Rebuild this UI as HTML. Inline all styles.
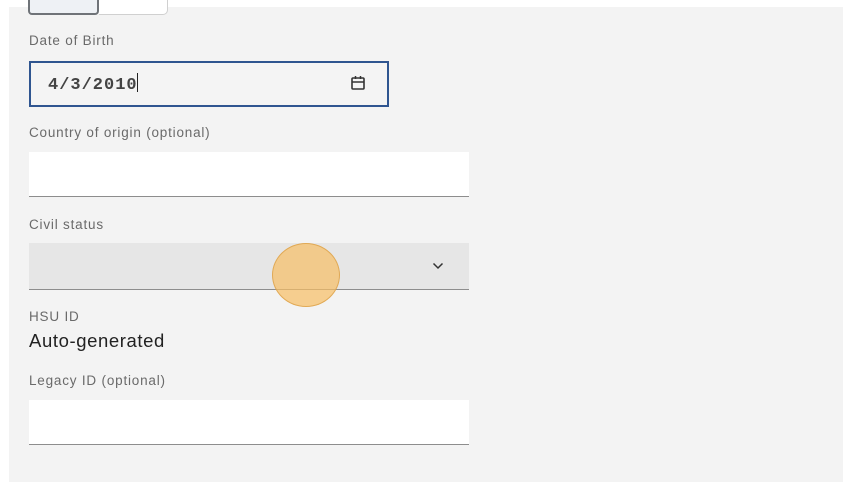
<!DOCTYPE html>
<html><head><meta charset="utf-8"><style>
*{margin:0;padding:0;box-sizing:border-box}
body{width:852px;height:490px;background:#fff;position:relative;overflow:hidden;font-family:"Liberation Sans",sans-serif}
.panel{position:absolute;left:9px;top:7px;width:834px;height:475px;background:#f3f3f3}
.a{position:absolute}
.lbl{position:absolute;left:29px;font-size:13.5px;letter-spacing:0.8px;color:#6a6a6a}
.inp{position:absolute;left:29px;width:440px;height:45px;background:#fff;border-bottom:1px solid #8d8d8d}
</style></head><body>
<div class="panel"></div>
<div class="a" style="left:28px;top:-4px;width:71px;height:19px;background:#eef1f5;border:2px solid #6f7378;border-radius:0 0 4px 4px"></div>
<div class="a" style="left:99px;top:-4px;width:69px;height:19px;background:#fff;border:1px solid #d0d0d0;border-left:none;border-radius:0 0 5px 0"></div>
<div class="lbl" style="top:33px">Date of Birth</div>
<div class="a" style="left:29px;top:61px;width:360px;height:46px;background:#f4f4f4;border:2px solid #2f5590"></div>
<div class="a" style="left:48px;top:73px;font-family:'Liberation Mono',monospace;font-size:17px;letter-spacing:1px;font-weight:bold;color:#444">4/3/2010<span style="display:inline-block;width:1px;height:19px;background:#222;vertical-align:-3px;margin-left:-1px"></span></div>
<svg class="a" style="left:350px;top:75px" width="16" height="16" viewBox="0 0 16 16"><rect x="2" y="3" width="12" height="11" rx="1" fill="none" stroke="#333" stroke-width="1.6"/><line x1="2" y1="7" x2="14" y2="7" stroke="#333" stroke-width="1.5"/><line x1="5.5" y1="1" x2="5.5" y2="4" stroke="#333" stroke-width="1.5"/><line x1="10.5" y1="1" x2="10.5" y2="4" stroke="#333" stroke-width="1.5"/></svg>
<div class="lbl" style="top:125px">Country of origin (optional)</div>
<div class="inp" style="top:152px"></div>
<div class="lbl" style="top:217px">Civil status</div>
<div class="inp" style="top:243px;background:#e6e6e6;height:47px"></div>
<svg class="a" style="left:432px;top:262px" width="12" height="8" viewBox="0 0 12 8"><path d="M1.5 1.5L6 6l4.5-4.5" fill="none" stroke="#333" stroke-width="1.5"/></svg>
<div class="a" style="left:272px;top:243px;width:68px;height:64px;border-radius:50%;background:rgba(247,190,100,0.7);border:1.5px solid rgba(220,160,70,0.8)"></div>
<div class="lbl" style="top:309px">HSU ID</div>
<div class="a" style="left:29px;top:330px;font-size:18.5px;letter-spacing:0.6px;color:#222">Auto-generated</div>
<div class="lbl" style="top:373px">Legacy ID (optional)</div>
<div class="inp" style="top:400px"></div>
</body></html>
